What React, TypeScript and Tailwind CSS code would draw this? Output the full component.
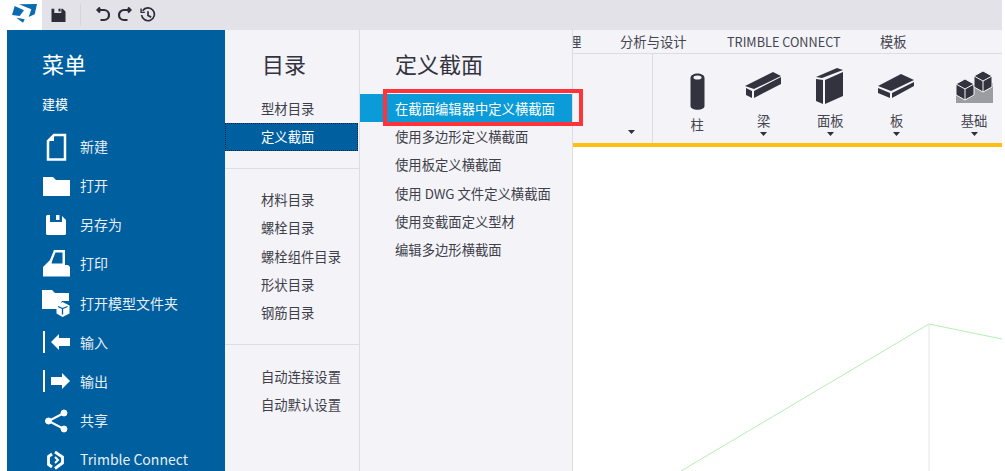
import { ReactNode } from 'react';

const FONT = '"Noto Sans CJK SC", "Noto Sans", sans-serif';

const NewIcon = () => (
  <svg width="27" height="28" viewBox="0 0 27 28" fill="none">
    <path d="M11 2h11v24.500H5V8z" stroke="white" strokeWidth="2.500" />
    <path d="M11 2v6H5z" fill="white" />
  </svg>
);
const FolderIcon = () => (
  <svg width="27" height="20" viewBox="0 0 27 20" fill="white">
    <path d="M0 1h10l3 3h14v16H0z" />
  </svg>
);
const SaveIcon = () => (
  <svg width="20" height="20" viewBox="0 0 20 20">
    <path d="M1 0h3v7h12V1l4 4v14l-1 1H1l-1-1V1z" fill="white" />
    <path d="M10 0h3.500v5H10z" fill="white" />
  </svg>
);
const PrintIcon = () => (
  <svg width="27" height="27" viewBox="0 0 27 27" fill="white">
    <path
      fillRule="evenodd"
      d="M0 26.500V17l7-7 4-10h11v15h3l2 2v9.500zM12.500 2.500h7v11H8.500l1-3.500z"
    />
  </svg>
);
const ModelFolderIcon = () => (
  <svg width="28" height="27" viewBox="0 0 28 27">
    <path d="M0 0h10l3 3h14v8h-7l-3 5v3H0z" fill="white" />
    <path d="M20.500 12l7 3.500v8l-7 3.500-6-3.500v-8z" fill="white" />
    <path d="M16 16.500l4.500 2 5-2M20.500 18.500v6" stroke="#00609f" strokeWidth="1.300" fill="none" />
  </svg>
);
const ImportIcon = () => (
  <svg width="27" height="24" viewBox="0 0 27 24" fill="white">
    <rect x="0" y="1" width="2" height="22" />
    <path d="M8 12l8-8v4h11v8H16v4z" />
  </svg>
);
const ExportIcon = () => (
  <svg width="27" height="24" viewBox="0 0 27 24" fill="white">
    <rect x="0" y="1" width="2" height="22" />
    <path d="M27 12l-8-8v4H8v8h11v4z" />
  </svg>
);
const ShareIcon = () => (
  <svg width="24" height="24" viewBox="0 0 24 24" fill="white" stroke="white">
    <circle cx="20" cy="4" r="3" />
    <circle cx="4.500" cy="12" r="3" />
    <circle cx="20" cy="20" r="3" />
    <path d="M20 4L4.500 12 20 20" fill="none" strokeWidth="2" />
  </svg>
);
const ConnectIcon = () => (
  <svg width="20" height="20" viewBox="0 0 20 20" fill="none" stroke="white" strokeWidth="2.800">
    <path d="M6 4L2.500 6.500v8L6 17" />
    <path d="M9 2l7.500 5v6L9 18.500" />
    <path d="M9 7l3 3-3 3" strokeWidth="2" />
  </svg>
);

const Logo = () => (
  <svg width="25" height="19" viewBox="0 0 25 19" fill="#0a6cb0">
    <path d="M7 0.300L25 0l-2.300 10.300-6 2.700 2.600-7.700z" />
    <path d="M2.700 2L12 6.300 7.700 12 0 11z" />
    <path d="M4.300 13.700l8.400 1.600L11 18.700z" />
  </svg>
);

const Caret = () => (
  <svg width="7" height="4" viewBox="0 0 7 4" fill="#2f2f3d">
    <path d="M0 0h7L3.500 4z" />
  </svg>
);

const ColumnIcon = () => (
  <svg width="15" height="37" viewBox="0 0 15 37" fill="#33333f">
    <path d="M0.500 5c0-6 14-6 14 0v28c0 5-14 5-14 0z" />
    <ellipse cx="7.500" cy="4.500" rx="4" ry="2" fill="#f3f3f8" />
  </svg>
);
const BeamIcon = () => (
  <svg width="37" height="27" viewBox="0 0 37 27" fill="#33333f">
    <path d="M0 14L28 0l8 4L9 17z" />
    <path d="M1 16l6 3v7l-6-3z" />
    <path d="M9 19l27-14v7L9 26z" />
  </svg>
);
const PanelIcon = () => (
  <svg width="28" height="36" viewBox="0 0 28 36" fill="#33333f">
    <path d="M0 9L21 0l6 2L6 10z" />
    <path d="M0 11l7 1v24l-7-3z" />
    <path d="M9 12l18-8v24L9 36z" />
  </svg>
);
const SlabIcon = () => (
  <svg width="37" height="24" viewBox="0 0 37 24" fill="#33333f">
    <path d="M0 12L23 0l13 6-23 11z" />
    <path d="M0 14l12 5v5L0 19z" />
    <path d="M14 19l22-11v4L14 24z" />
  </svg>
);
const FoundationIcon = () => (
  <svg width="37" height="33" viewBox="0 0 37 33">
    <path d="M0 33V22l37-9v20z" fill="#9c9ca3" />
    <path d="M0 14l9-5 9 5v11l-9 5-9-5z" fill="#33333f" stroke="#f3f3f8" strokeWidth="1" />
    <path d="M18 6l9-5 9 5v11l-9 5-9-5z" fill="#33333f" stroke="#f3f3f8" strokeWidth="1" />
    <path d="M0 14l9 5 9-5M9 19v11M18 6l9 5 9-5M27 11v11" stroke="#f3f3f8" strokeWidth="1" fill="none" />
  </svg>
);

const FILE_MENU: { icon: ReactNode; label: string }[] = [
  { icon: <NewIcon />, label: '新建' },
  { icon: <FolderIcon />, label: '打开' },
  { icon: <SaveIcon />, label: '另存为' },
  { icon: <PrintIcon />, label: '打印' },
  { icon: <ModelFolderIcon />, label: '打开模型文件夹' },
  { icon: <ImportIcon />, label: '输入' },
  { icon: <ExportIcon />, label: '输出' },
  { icon: <ShareIcon />, label: '共享' },
  { icon: <ConnectIcon />, label: 'Trimble Connect' },
];

const CATALOG_GROUP = ['材料目录', '螺栓目录', '螺栓组件目录', '形状目录', '钢筋目录'];
const SECTION_ITEMS = [
  '使用多边形定义横截面',
  '使用板定义横截面',
  '使用 DWG 文件定义横截面',
  '使用变截面定义型材',
  '编辑多边形横截面',
];

const TOOLS: { icon: ReactNode; label: string; caret: boolean; box: string; iconBox: string }[] = [
  { icon: <ColumnIcon />, label: '柱', caret: false, box: 'w-[66.500px]', iconBox: 'pt-[18px]' },
  { icon: <BeamIcon />, label: '梁', caret: true, box: 'w-[66.500px]', iconBox: 'pt-[6px]' },
  { icon: <PanelIcon />, label: '面板', caret: true, box: 'w-[66.500px]', iconBox: 'pt-[6px]' },
  { icon: <SlabIcon />, label: '板', caret: true, box: 'w-[66.500px]', iconBox: 'pt-[6px]' },
  { icon: <FoundationIcon />, label: '基础', caret: true, box: 'w-[88px]', iconBox: 'pt-[7px]' },
];

export default function App() {
  return (
    <div className="h-[471px] w-[1005px] overflow-hidden bg-white" style={{ fontFamily: FONT }}>
      <div className="flex h-full w-[1002px] flex-col">
        {/* quick access bar */}
        <div className="flex h-[30px] shrink-0 items-center bg-[#e3e2e8]">
          <div className="flex h-full w-[42px] items-center justify-center bg-white pb-[4px] pl-[7px]">
            <Logo />
          </div>
          <div className="ml-[9px] flex w-[15px] justify-center pb-[1px]">
            <svg width="15" height="14" viewBox="0 0 20 20">
              <path d="M0 1h4v6h10V1h2l4 4v15H0z" fill="#2d2d38" />
              <path d="M10 1h3v4h-3z" fill="#2d2d38" />
            </svg>
          </div>
          <div className="ml-[14px] h-[22px] w-px bg-[#d5d5da]" />
          <div className="ml-[15px] flex items-center gap-[8px] pb-[1px] text-[#2d2d38]">
            <svg width="14" height="15" viewBox="0 0 14 15" fill="none" stroke="currentColor" strokeWidth="2.200">
              <path d="M1.500 3h6.500a5 5 0 0 1 0 10H4.500M4 0.500L1.500 3 4 5.500" />
            </svg>
            <svg width="14" height="15" viewBox="0 0 14 15" fill="none" stroke="currentColor" strokeWidth="2.200">
              <path d="M12.500 3H6a5 5 0 0 0 0 10h3.500M10 0.500L12.500 3 10 5.500" />
            </svg>
            <svg width="16" height="16" viewBox="0 0 15 15" fill="none" stroke="currentColor" strokeWidth="1.600">
              <path d="M2.500 3.500A6 6 0 1 1 1.500 7.500M7.500 4v4l3 1.500" />
              <path d="M1 1.500v3.500h3.500" strokeWidth="1.300" />
            </svg>
          </div>
        </div>

        <div className="flex min-h-0 flex-1">
          <div className="w-[7px] shrink-0 bg-white" />

          {/* file menu */}
          <div className="w-[218px] shrink-0 bg-[#00609f] pl-[35px] text-white">
            <div className="mt-[17px] text-[22px] leading-[32px]">菜单</div>
            <div className="mt-[15px] text-[13px] leading-[20px]">建模</div>
            <div className="mt-[13px] flex flex-col">
              {FILE_MENU.map((item) => (
                <div className="flex h-[39.150px] shrink-0 items-center" key={item.label}>
                  <div className="flex w-[38px] justify-center pr-[10px]">{item.icon}</div>
                  <span className="text-[14px] text-[#e8eef5]">{item.label}</span>
                </div>
              ))}
            </div>
          </div>

          {/* catalogs */}
          <div className="w-[135px] shrink-0 border-r border-[#dcdce2] bg-[#f3f3f8] text-[#3f3f4a]">
            <div className="mt-[17px] pl-[37px] text-[22px] leading-[32px] text-[#33333f]">目录</div>
            <div className="mt-[16px] flex h-[28px] items-center pl-[36px] text-[13.330px]">型材目录</div>
            <div className="mr-[1px] flex h-[28px] items-center border border-dotted border-[#0a2a44] bg-[#00609f] pl-[35px] text-[13.330px] text-white">
              定义截面
            </div>
            <div className="mt-[17px] border-t border-[#dcdce2] pt-[17px]">
              {CATALOG_GROUP.map((label) => (
                <div className="flex h-[28.300px] items-center pl-[36px] text-[13.330px]" key={label}>
                  {label}
                </div>
              ))}
            </div>
            <div className="mt-[17px] border-t border-[#dcdce2] pt-[18px]">
              <div className="flex h-[28px] items-center pl-[36px] text-[13.330px]">自动连接设置</div>
              <div className="flex h-[28px] items-center pl-[36px] text-[13.330px]">自动默认设置</div>
            </div>
          </div>

          {/* define cross section */}
          <div className="relative z-10 w-[213px] shrink-0 border-r border-[#dcdce2] bg-[#f3f3f8] text-[#3f3f4a]">
            <div className="mt-[17px] pl-[35px] text-[22px] leading-[32px] text-[#33333f]">定义截面</div>
            <div className="relative mt-[15px] flex h-[28px] items-center bg-[#0a9bd8] pl-[35px] pt-[2px] text-[13.330px] text-white">
              在截面编辑器中定义横截面
              <div className="absolute -top-[5px] left-[23px] h-[37px] w-[200px] border-[4px] border-[#ff3338]" />
            </div>
            <div className="pt-[1px]">
              {SECTION_ITEMS.map((label) => (
                <div className="flex h-[28.300px] items-center pl-[35px] text-[13.330px]" key={label}>
                  {label}
                </div>
              ))}
            </div>
          </div>

          {/* ribbon and model view */}
          <div className="flex min-w-0 flex-1 flex-col overflow-hidden">
            <div className="flex h-[24px] shrink-0 items-center border-b border-[#dcdce2] bg-[#f3f3f8] pt-[1px] text-[13.330px] text-[#45454f]">
              <span className="-ml-[5px] w-[52px]">理</span>
              <span className="w-[107px]">分析与设计</span>
              <span className="w-[153px] text-[12.700px]">TRIMBLE CONNECT</span>
              <span>模板</span>
            </div>
            <div className="flex h-[89px] shrink-0 bg-[#f3f3f8]">
              <div className="flex w-[80px] shrink-0 items-end justify-end border-r border-[#dcdce2] pb-[9px] pr-[17px]">
                <Caret />
              </div>
              <div className="ml-[11px] flex shrink-0">
                {TOOLS.map((tool) => (
                  <div className={`flex shrink-0 flex-col items-center ${tool.box}`} key={tool.label}>
                    <div className={`flex h-[57px] items-center ${tool.iconBox}`}>{tool.icon}</div>
                    <span
                      className={`text-[13.330px] leading-[18px] text-[#45454f] ${tool.caret ? 'mt-[1px]' : 'mt-[5px]'}`}
                    >
                      {tool.label}
                    </span>
                    {tool.caret && (
                      <div className="mt-[2px] flex">
                        <Caret />
                      </div>
                    )}
                  </div>
                ))}
              </div>
            </div>
            <div className="h-[4px] shrink-0 bg-[#fdbf13]" />
            <div className="min-h-0 flex-1 bg-white">
              <svg className="h-full w-full" viewBox="0 0 429 324" fill="none">
                <path d="M108 324L356 177l73 15" stroke="#b5efb0" strokeWidth="1" />
                <path d="M356 177v147" stroke="#dfe8de" strokeWidth="1" />
              </svg>
            </div>
          </div>
        </div>
      </div>
    </div>
  );
}
